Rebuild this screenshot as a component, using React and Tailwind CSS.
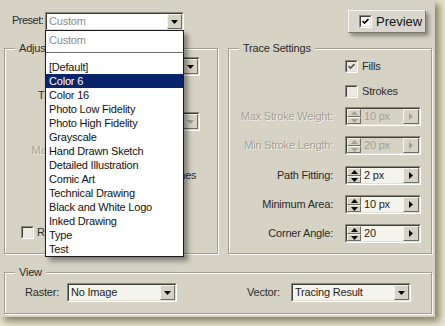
import React from 'react';

const presets = [
  '[Default]', 'Color 6', 'Color 16', 'Photo Low Fidelity', 'Photo High Fidelity',
  'Grayscale', 'Hand Drawn Sketch', 'Detailed Illustration', 'Comic Art',
  'Technical Drawing', 'Black and White Logo', 'Inked Drawing', 'Type', 'Test',
];

function DownTri({ color = '#000' }) {
  return (
    <svg width="7" height="4" viewBox="0 0 7 4"><polygon points="0,0 7,0 3.5,4" fill={color} /></svg>
  );
}

function UpTri({ color = '#000' }) {
  return (
    <svg width="7" height="4" viewBox="0 0 7 4"><polygon points="0,4 7,4 3.5,0" fill={color} /></svg>
  );
}

function RightTri({ color = '#000' }) {
  return (
    <svg width="4" height="7" viewBox="0 0 4 7"><polygon points="0,0 0,7 4,3.5" fill={color} /></svg>
  );
}

// classic 2px sunken frame
function Sunken({ className = '', inner = '', children }) {
  return (
    <div className={`flex border border-t-[#8a877b] border-l-[#8a877b] border-b-white border-r-white ${className}`}>
      <div className={`flex min-w-0 flex-1 border border-t-[#3f3e39] border-l-[#3f3e39] border-b-[#e2dfd4] border-r-[#e2dfd4] ${inner}`}>
        {children}
      </div>
    </div>
  );
}

function Raised({ className = '', children }) {
  return (
    <div className={`flex items-center justify-center border border-t-[#f4f3ee] border-l-[#f4f3ee] border-b-[#6f6d62] border-r-[#6f6d62] bg-[#d6d3c5] ${className}`}>
      {children}
    </div>
  );
}

function Check({ checked, dim }) {
  return (
    <span className="flex h-[13px] w-[13px] shrink-0 border border-t-[#8a877b] border-l-[#8a877b] border-b-white border-r-white">
      <span className={`flex flex-1 items-center justify-center border border-t-[#3f3e39] border-l-[#3f3e39] border-b-[#e2dfd4] border-r-[#e2dfd4] ${dim ? 'bg-[#ebe9e0]' : 'bg-white'}`}>
        {checked && (
          <svg width="7" height="7" viewBox="0 0 7 7">
            <polyline points="0.5,3 2.5,5 6.5,1" fill="none" stroke={dim ? '#55534b' : '#000'} strokeWidth="1.7" />
          </svg>
        )}
      </span>
    </span>
  );
}

function Select({ value, className = '', bg = 'bg-[#f4f3ec]', text = 'text-[#1e1e1e]', disabled }) {
  return (
    <Sunken className={`h-[19px] ${className}`} inner={bg}>
      <span className={`flex-1 truncate pl-[2px] leading-[15px] ${text}`}>{value}</span>
      <Raised className="w-[15px]">
        <DownTri color={disabled ? '#a3a094' : '#000'} />
      </Raised>
    </Sunken>
  );
}

function Spinner({ value, disabled, className = '' }) {
  const tri = disabled ? '#a3a094' : '#000';
  return (
    <Sunken className={`h-[19px] w-[76px] ${className}`} inner={disabled ? 'bg-[#d6d3c5]' : 'bg-[#f4f3ec]'}>
      <div className="flex w-[14px] flex-col">
        <Raised className="h-[8px]"><UpTri color={tri} /></Raised>
        <Raised className="flex-1"><DownTri color={tri} /></Raised>
      </div>
      <span className={`flex-1 pl-[3px] leading-[15px] ${disabled ? 'text-[#a3a094]' : 'text-[#1e1e1e]'}`}>{value}</span>
      <Raised className="w-[16px]"><RightTri color={tri} /></Raised>
    </Sunken>
  );
}

function TraceRow({ label, value, disabled, className = '' }) {
  return (
    <div className={`flex h-[19px] items-center ${className}`}>
      <span className={`w-[104px] text-right ${disabled ? 'text-[#a3a094] [text-shadow:1px_1px_0_#f2f1ea]' : ''}`}>{label}</span>
      <Spinner value={value} disabled={disabled} className="ml-[12px]" />
    </div>
  );
}

const groupBox = 'border border-[#a19e92] shadow-[inset_1px_1px_0_#fbfaf5,1px_1px_0_#fbfaf5]';
const legendCls = 'ml-[10px] bg-[#d6d3c5] px-[4px] leading-[13px]';

export default function App() {
  return (
    <div className="h-[326px] w-[445px] overflow-hidden bg-[#e6e4cd] font-['Liberation_Sans',Arial,sans-serif] text-[11px] tracking-[-0.2px] text-[#2a2a2a]">
      <div className="flex h-[317px] w-[435px] flex-col bg-[#d6d3c5] pl-[4px] pr-[3px] pt-[10px] shadow-[4px_4px_7px_rgba(60,60,20,0.6)]">
        {/* Preset row */}
        <div className="flex h-[24px] items-start">
          <span className="ml-[8px] mt-[4px] w-[33px] whitespace-nowrap leading-[13px] tracking-[-0.5px]">Preset:</span>
          <div className="relative mt-[2px]">
            <Select value="Custom" className="w-[139px]" bg="bg-white" text="text-[#8a8a8a]" />
            <div className="absolute left-0 top-[18px] z-10 w-[139px] border border-[#1a1a1a] bg-white pt-[2px] text-[#111] shadow-[4px_4px_5px_rgba(0,0,0,0.4)]">
              <div className="h-[14px] pl-[3px] leading-[14px] text-[#8a8a8a]">Custom</div>
              <div className="h-[13px] pt-[5px]"><div className="h-px bg-[#6e6e6e]" /></div>
              {presets.map((p) => (
                <div key={p} className={`h-[14px] pl-[3px] leading-[14px] ${p === 'Color 6' ? 'bg-[#0a246a] text-white' : ''}`}>
                  {p}
                </div>
              ))}
            </div>
          </div>
          <button className="ml-auto mr-[6px] flex h-[23px] w-[78px] items-center border border-t-[#f6f5f0] border-l-[#f6f5f0] border-b-[#7a786d] border-r-[#7a786d] bg-[#d8d6cd] pl-[10px] shadow-[3px_3px_4px_rgba(0,0,0,0.35)]">
            <Check checked />
            <span className="ml-[4px] text-[13px] tracking-normal text-[#111]">Preview</span>
          </button>
        </div>

        <div className="mt-[8px] flex gap-[10px]">
          {/* Adjustments */}
          <fieldset className={`h-[212px] w-[214px] pt-[2px] ${groupBox}`}>
            <legend className={legendCls}>Adjustments</legend>
            <div className="flex h-[19px] items-center">
              <span className="w-[83px] text-right">Mode:</span>
              <Select value="Color" className="ml-[4px] w-[108px]" />
            </div>
            <div className="mt-[10px] flex h-[19px] items-center">
              <span className="w-[83px] text-right">Threshold:</span>
              <Spinner value="128" disabled className="ml-[4px]" />
            </div>
            <div className="mt-[7px] flex h-[19px] items-center">
              <span className="w-[83px] text-right">Palette:</span>
              <Select value="Automatic" className="ml-[4px] w-[108px]" disabled />
            </div>
            <div className="mt-[10px] flex h-[19px] items-center">
              <span className="w-[83px] text-right text-[#a3a094] [text-shadow:1px_1px_0_#f2f1ea]">Max Colors:</span>
              <Spinner value="6" disabled className="ml-[4px]" />
            </div>
            <div className="mt-[9px] flex h-[13px] items-center pl-[82px]">
              <Check checked dim />
              <span className="ml-[4px]">Output to Swatches</span>
            </div>
            <div className="mt-[13px] flex h-[19px] items-center">
              <span className="w-[83px] text-right">Blur:</span>
              <Spinner value="0 px" className="ml-[4px]" />
            </div>
            <div className="mt-[12px] flex h-[13px] items-center pl-[16px]">
              <Check dim />
              <span className="ml-[3px]">Resample:</span>
            </div>
          </fieldset>

          {/* Trace Settings */}
          <fieldset className={`h-[212px] w-[204px] pt-[5px] ${groupBox}`}>
            <legend className={legendCls}>Trace Settings</legend>
            <div className="flex h-[13px] items-center pl-[116px]">
              <Check checked dim />
              <span className="ml-[4px]">Fills</span>
            </div>
            <div className="mt-[12px] flex h-[13px] items-center pl-[116px]">
              <Check dim />
              <span className="ml-[4px]">Strokes</span>
            </div>
            <TraceRow label="Max Stroke Weight:" value="10 px" disabled className="mt-[9px]" />
            <TraceRow label="Min Stroke Length:" value="20 px" disabled className="mt-[10px]" />
            <TraceRow label="Path Fitting:" value="2 px" className="mt-[11px]" />
            <TraceRow label="Minimum Area:" value="10 px" className="mt-[10px]" />
            <TraceRow label="Corner Angle:" value="20" className="mt-[10px]" />
          </fieldset>
        </div>

        {/* View */}
        <fieldset className={`mt-[12px] h-[48px] w-[428px] ${groupBox}`}>
          <legend className={legendCls}>View</legend>
          <div className="mt-[4px] flex h-[19px] items-center">
            <span className="ml-[20px] w-[42px]">Raster:</span>
            <Select value="No Image" className="w-[110px]" />
            <span className="ml-[70px] w-[44px]">Vector:</span>
            <Select value="Tracing Result" className="w-[120px]" />
          </div>
        </fieldset>
      </div>
    </div>
  );
}
